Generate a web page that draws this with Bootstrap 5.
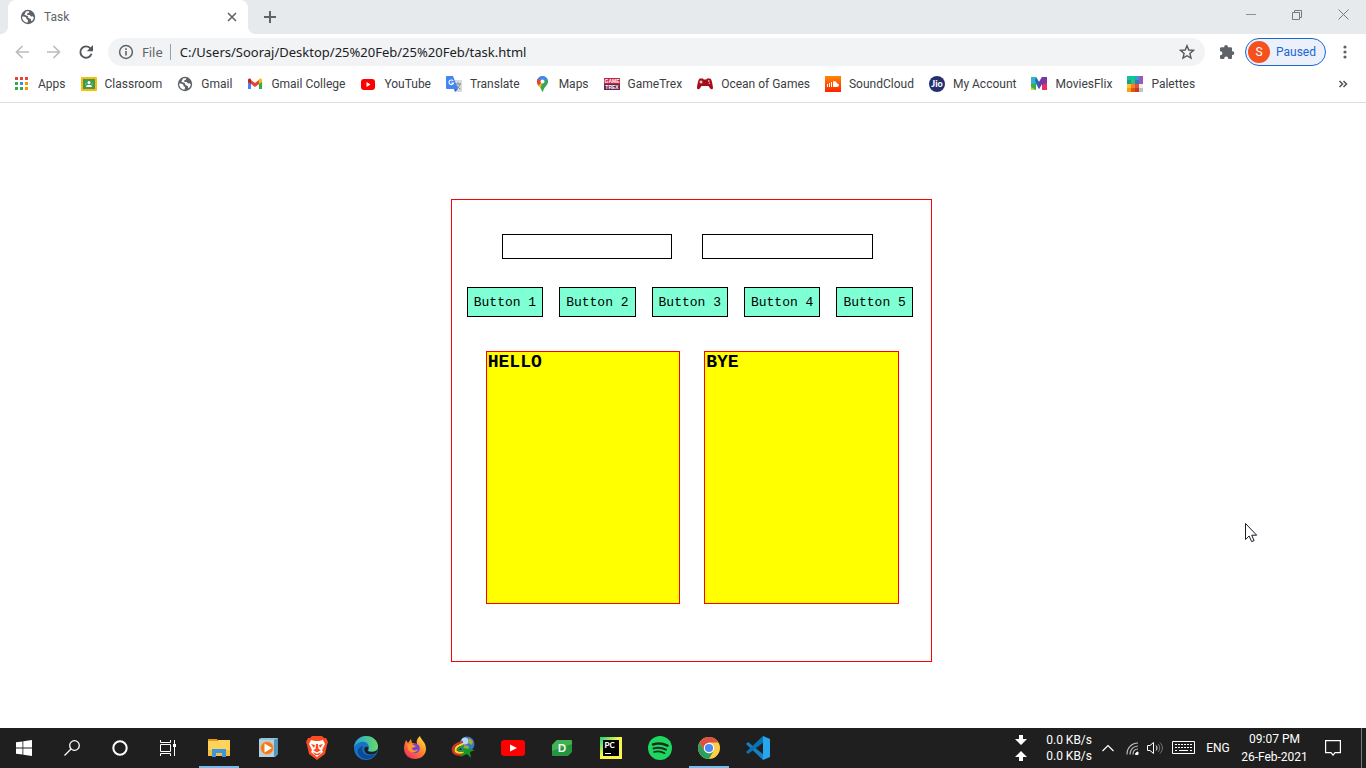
<!DOCTYPE html>
<html lang="en">
<head>
<meta charset="utf-8">
<meta name="viewport" content="width=device-width, initial-scale=1">
<title>Task</title>
<link href="https://cdn.jsdelivr.net/npm/bootstrap@5.3.0/dist/css/bootstrap.min.css" rel="stylesheet">
<style>
  body { font-family: Roboto, "Noto Sans", sans-serif; font-size: 12px; line-height: 16px; color: #3c4043; background: #fff; }
  svg { display: block; flex-shrink: 0; }
  .plain { border: 0; background: none; padding: 0; color: inherit; display: flex; align-items: center; justify-content: center; flex-shrink: 0; }

  /* tab strip */
  .tab-strip { background: #e7eaed; height: 34px; padding-left: 8px; }
  .active-tab { position: relative; width: 240px; background: #fff; border-radius: 8px 8px 0 0; padding: 0 10px 0 12px; color: #5f6368; }
  .active-tab::before, .active-tab::after { content: ""; position: absolute; bottom: 0; width: 8px; height: 8px; }
  .active-tab::before { left: -8px; background: radial-gradient(circle at 0 0, transparent 8px, #fff 8px); }
  .active-tab::after { right: -8px; background: radial-gradient(circle at 100% 0, transparent 8px, #fff 8px); }
  .new-tab { width: 44px; height: 34px; }
  .win-btn { width: 46px; height: 29px; }

  /* toolbar */
  .toolbar { height: 36px; padding: 0 10px 0 6px; }
  .nav-btn { width: 32px; height: 28px; }
  .address { height: 28px; border-radius: 14px; background: #f1f3f4; margin-left: 6px; padding: 0 10px; color: #5f6368; font-family: "Noto Sans", sans-serif; font-size: 13px; }
  .address-sep { width: 1px; height: 16px; background: #9aa0a6; margin: 0 9px 0 7px; }
  .address input { border: 0; background: none; outline: 0; padding: 0; color: #202124; min-width: 0; }
  .address label { margin-left: 8px; }
  .extensions { margin: 0 10px 0 14px; }
  .profile { height: 28px; width: 81px; border: 1px solid #1967d2; border-radius: 14px; background: #ebf0fa; color: #1967d2; padding: 0 9px 0 2px; justify-content: space-between; }
  .avatar { width: 22px; height: 22px; border-radius: 50%; background: #f4511e; color: #fff; line-height: 22px; text-align: center; }

  /* bookmarks */
  .bookmarks { height: 33px; border-bottom: 1px solid #dadce0; padding: 0 14px 4px; gap: 15px; }
  .bookmarks a { color: inherit; text-decoration: none; gap: 8px; white-space: nowrap; }

  /* page */
  .page-area { padding-top: 96px; font-family: "Liberation Mono", "Courier New", monospace; color: #000; }
  .frame { width: 481px; margin-left: 33%; border: 1px solid #f00; padding: 34px 18px 57px 15px; }
  .fields { gap: 30px; margin: 0 40px 0 35px; }
  .field { flex: 1 1 0; min-width: 0; height: 25px; border: 1px solid #000; background: #fff; padding: 0 4px; }
  .mint { height: 30px; border: 1px solid #000; border-radius: 0; background: #7fffd4; font-size: 13px; line-height: 16px; padding: 2px 0 0; color: #000; flex: 1 1 0; }
  .panels { margin: 34px 14px 0 19px; }
  .panel { flex: 1 1 0; height: 253px; border: 1px solid #f00; background: #ff0; padding: 0 1px; }
  .panel h2 { font-size: 18px; line-height: 21px; font-weight: 700; margin: 0; }
  .pointer { position: absolute; right: 108px; bottom: 224px; }

  /* taskbar */
  .taskbar { height: 40px; background: #1f1f1f; color: #fff; }
  .sys { width: 48px; height: 40px; }
  .apps { margin-left: 2px; }
  .app { width: 49px; height: 40px; border-bottom: 2px solid transparent; border-top: 2px solid transparent; }
  .app.running { background: linear-gradient(#76b9ed, #76b9ed) center bottom / 40px 2px no-repeat; border: 0; }
  .tray { padding-right: 4px; border-right: 1px solid #777; margin-right: 4px; }
  .speed { width: 65px; }
  .lang { width: 44px; }
  .clock { width: 69px; line-height: 18px; text-align: center; white-space: nowrap; }
</style>
</head>
<body class="d-flex flex-column min-vh-100 position-relative">
<svg width="0" height="0" class="position-absolute" aria-hidden="true">
  <symbol id="globe" viewBox="0 0 16 16"><circle cx="8" cy="8" r="7.2" fill="#5f6368"/><path d="M2.2 7.6c1.600.2 3 .1 3.900 1 .8.7-.2 1.600.900 1.900.9.2 1.300.6 1 1.600l-.6 1.600c-3.100-.100-5.500-2.800-5.200-6.100zM6 2.500c1-.3 2.200-.5 3.300-.2l-.4 1.400-1.800.8.300 1.500 2.300.1 1.300 1.300 1.900-.2.900 1.200c-.3 1.700-1.200 3-2.500 3.900l-.4-1.800c-.2-.8-.8-1-1.600-1.100L8 8.500l.1-1.300-1.700-.6-2.100-.900z" fill="#fff"/></symbol>
</svg>

<header>
  <div class="tab-strip d-flex align-items-start">
    <div class="active-tab d-flex align-items-center h-100">
      <svg width="16" height="16"><use href="#globe"/></svg>
      <span class="flex-fill ms-2">Task</span>
      <button class="plain" aria-label="Close tab"><svg width="12" height="12" viewBox="0 0 12 12" stroke="#5f6368" stroke-width="1.6"><path d="M2 2l8 8M10 2l-8 8"/></svg></button>
    </div>
    <button class="plain new-tab" aria-label="New tab"><svg width="12" height="12" viewBox="0 0 12 12" stroke="#5f6368" stroke-width="2"><path d="M6 0v12M0 6h12"/></svg></button>
    <div class="d-flex ms-auto">
      <button class="plain win-btn" aria-label="Minimize"><svg width="10" height="10" viewBox="0 0 10 10" stroke="#8c8e90"><path d="M0 4.500h10"/></svg></button>
      <button class="plain win-btn" aria-label="Restore"><svg width="10" height="10" viewBox="0 0 10 10" fill="none" stroke="#77797b"><path d="M.5 2.500h7v7h-7zM2.500 2.500v-2h7v7h-2"/></svg></button>
      <button class="plain win-btn" aria-label="Close"><svg width="11" height="11" viewBox="0 0 11 11" stroke="#77797b"><path d="M.5.5l10 10M10.500.5l-10 10"/></svg></button>
    </div>
  </div>

  <div class="toolbar d-flex align-items-center">
    <button class="plain nav-btn" aria-label="Back"><svg width="14" height="14" viewBox="0 0 14 14" fill="none" stroke="#babcbe" stroke-width="1.700"><path d="M14 7H1.500M7.500 1L1.500 7l6 6"/></svg></button>
    <button class="plain nav-btn" aria-label="Forward"><svg width="14" height="14" viewBox="0 0 14 14" fill="none" stroke="#babcbe" stroke-width="1.700"><path d="M0 7h12.500M6.500 1l6 6-6 6"/></svg></button>
    <button class="plain nav-btn" aria-label="Reload"><svg width="16" height="16" viewBox="0 0 16 16"><path d="M12.600 4.600A5.700 5.700 0 1 0 13.500 9.800" fill="none" stroke="#54585c" stroke-width="1.900"/><path d="M15 1v6.200H8.800z" fill="#54585c"/></svg></button>
    <div class="address d-flex align-items-center flex-fill">
      <svg width="16" height="16" viewBox="0 0 16 16"><circle cx="8" cy="8" r="6.400" fill="none" stroke="#5f6368" stroke-width="1.500"/><path d="M7.200 7h1.600v4.500H7.200zM7.200 4.300h1.600v1.600H7.200z" fill="#5f6368"/></svg>
      <label for="url">File</label>
      <span class="address-sep"></span>
      <input id="url" class="flex-fill" type="text" value="C:/Users/Sooraj/Desktop/25%20Feb/25%20Feb/task.html">
      <button class="plain" aria-label="Bookmark"><svg width="16" height="16" viewBox="0 0 16 16"><path d="M8 1.700l1.800 4.300 4.700.4-3.600 3.100 1.100 4.600L8 11.700l-4 2.400 1.100-4.600L1.500 6.400 6.200 6z" fill="none" stroke="#54585c" stroke-width="1.400"/></svg></button>
    </div>
    <button class="plain extensions" aria-label="Extensions"><svg width="16" height="16" viewBox="0 0 16 16"><path d="M1 4.500Q1 3.200 2.300 3.200H5.200V2.800a1.800 1.800 0 0 1 3.700 0v.4h2.800q1.300 0 1.300 1.300v2.700h.4a1.900 1.900 0 0 1 0 3.800H13v2.700q0 1.300-1.300 1.300H9.200v-.4a2 2 0 0 0-4 0v.4H2.300Q1 15 1 13.700v-2.500h.4a2 2 0 0 0 0-4H1z" fill="#5f6368"/></svg></button>
    <button class="plain profile"><span class="avatar">S</span><span>Paused</span></button>
    <button class="plain ms-2" aria-label="Menu"><svg width="22" height="16" viewBox="0 0 22 16" fill="#5f6368"><circle cx="11" cy="3" r="1.600"/><circle cx="11" cy="8" r="1.600"/><circle cx="11" cy="13" r="1.600"/></svg></button>
  </div>

  <nav class="bookmarks d-flex align-items-center" aria-label="Bookmarks">
    <a href="#" class="d-flex align-items-center"><svg width="16" height="16" viewBox="1 0 16 16"><g fill="#ea4335"><path d="M2 1h3v3H2zM7 1h3v3H7zM12 1h3v3h-3z"/></g><path d="M2 6h3v3H2zM2 11h3v3H2zM7 11h3v3H7z" fill="#34a853"/><path d="M7 6h3v3H7z" fill="#4285f4"/><path d="M12 6h3v3h-3zM12 11h3v3h-3z" fill="#f29900"/></svg>Apps</a>
    <a href="#" class="d-flex align-items-center"><svg width="16" height="16" viewBox="0 0 16 16"><rect y="1" width="16" height="14" rx="1" fill="#fbbc04"/><path d="M2 3h12v10H2z" fill="#3f9b54"/><g fill="#fff"><circle cx="8" cy="6.500" r="1.500"/><path d="M5 11c0-3 6-3 6 0z"/></g><g fill="#8cc79b"><circle cx="4.800" cy="8" r=".8"/><circle cx="11.200" cy="8" r=".8"/></g></svg>Classroom</a>
    <a href="#" class="d-flex align-items-center"><svg width="16" height="16"><use href="#globe"/></svg>Gmail</a>
    <a href="#" class="d-flex align-items-center"><svg width="16" height="16" viewBox="0 0 16 16"><path d="M1 5v8h3V7z" fill="#4285f4"/><path d="M15 5v8h-3V7z" fill="#34a853"/><path d="M4 4l4 3 4-3v4l-4 3-4-3z" fill="#ea4335"/><path d="M1 6V4c0-1.500 1.800-2 3-1v5z" fill="#c5221f"/><path d="M15 6V4c0-1.500-1.800-2-3-1v5z" fill="#fbbc04"/></svg>Gmail College</a>
    <a href="#" class="d-flex align-items-center"><svg width="16" height="16" viewBox="0 0 16 16"><rect x="1" y="3" width="14" height="11" rx="3" fill="#f00"/><path d="M6.500 6l4 2.500-4 2.500z" fill="#fff"/></svg>YouTube</a>
    <a href="#" class="d-flex align-items-center"><svg width="16" height="16" viewBox="0 0 16 16"><path d="M6 4h9q1 0 1 1v10q0 1-1 1H9z" fill="#d6dadd"/><path d="M9 8h6M12 6.500V8M14 8c-.5 2-2 3.500-3.500 4.500M10.500 9c1 2 2 3 4 4" stroke="#7c8490" fill="none"/><path d="M0 1q0-1 1-1h6l5 13H1q-1 0-1-1z" fill="#4285f4"/><path d="M8 13h4l-3 3z" fill="#3367d6"/><path d="M7.200 5A2.300 2.300 0 1 0 7.500 7H5.300" fill="none" stroke="#fff" stroke-width="1.100"/></svg>Translate</a>
    <a href="#" class="d-flex align-items-center"><svg width="16" height="16" viewBox="0 0 16 16"><clipPath id="pin"><path d="M7.500 0a5.600 5.600 0 0 1 5.600 5.600c0 4-4.200 5-5 10h-1.200c-.8-5-5-6-5-10A5.600 5.600 0 0 1 7.500 0z"/></clipPath><g clip-path="url(#pin)"><path d="M0 0h15v16H0z" fill="#34a853"/><path d="M7.500 5.600L5 14 0 10 2 7z" fill="#fbbc04"/><path d="M0 1l7.500 4.600L3 10H0z" fill="#ea4335"/><path d="M3 0h12v2L7.500 6 3 2z" fill="#4285f4"/></g><circle cx="7.500" cy="5.600" r="2" fill="#fff"/></svg>Maps</a>
    <a href="#" class="d-flex align-items-center"><svg width="16" height="16" viewBox="0 0 16 16"><path d="M0 2h16v6H0z" fill="#c52342"/><path d="M0 8h16v6H0z" fill="#69264e"/><g fill="#fff" font-family="Liberation Sans" font-weight="700" font-size="5" text-anchor="middle"><text x="8" y="7">GAME</text><text x="8" y="13">TREX</text></g></svg>GameTrex</a>
    <a href="#" class="d-flex align-items-center"><svg width="16" height="16" viewBox="0 0 16 16"><path d="M3 2.500h3l.7 1h2.600l.7-1h3c1.500 0 2.500 5 3 9 .1 2.300-2 2.300-3 .8L11.500 10h-7L3 12.300c-1 1.500-3.100 1.500-3-.8.5-4 1.500-9 3-9z" fill="#a60d18"/><path d="M2.500 6h3M4 4.500v3" stroke="#fff"/><circle cx="11.800" cy="5" r=".8" fill="#fff"/><circle cx="12.500" cy="7.200" r=".8" fill="#eaa"/></svg>Ocean of Games</a>
    <a href="#" class="d-flex align-items-center"><svg width="16" height="16" viewBox="0 0 16 16"><linearGradient id="sc" x2="0" y2="1"><stop stop-color="#f80"/><stop offset="1" stop-color="#f20"/></linearGradient><path d="M0 0h16v16H0z" fill="url(#sc)"/><path d="M2.500 8v3M4.500 7v4M6.500 6v5" stroke="#fff"/><path d="M8 5.500c2-1 4 .2 4 2 2.600-.3 2.600 3.500 0 3.500H8z" fill="#fff"/></svg>SoundCloud</a>
    <a href="#" class="d-flex align-items-center"><svg width="16" height="16" viewBox="0 0 16 16"><circle cx="8" cy="8" r="8" fill="#25306f"/><text x="8" y="11" text-anchor="middle" font-family="Lato" font-weight="900" font-size="9" fill="#fff">Jio</text></svg>My Account</a>
    <a href="#" class="d-flex align-items-center"><svg width="16" height="16" viewBox="0 0 16 16"><path d="M0 1h5l3 5 3-5h5v13h-5V8l-3 5-3-5v6H0z" fill="#31b6c8"/><path d="M0 8l5-1v7H0z" fill="#39ad55"/><path d="M0 11l5 3H0z" fill="#c9d42a"/><path d="M11 1h5v13h-5V8l-3 5V6z" fill="#7c38a0"/><path d="M16 7v7h-5V9z" fill="#e8325c"/><path d="M5 1l3 5v7L4 5z" fill="#2c65b5"/></svg>MoviesFlix</a>
    <a href="#" class="d-flex align-items-center"><svg width="16" height="16" viewBox="0 0 16 16" shape-rendering="crispEdges"><path d="M0 0h4v4H0z" fill="#1abc9c"/><path d="M4 0h4v4H4z" fill="#00d084"/><path d="M8 0h4v4H8z" fill="#3498db"/><path d="M12 0h4v8h-4z" fill="#9b59b6"/><path d="M0 4h4v4H0z" fill="#16a085"/><path d="M4 4h4v4H4z" fill="#40b883"/><path d="M8 4h4v4H8z" fill="#2980b9"/><path d="M0 8h4v4H0z" fill="#fbc531"/><path d="M4 8h4v4H4z" fill="#f58220"/><path d="M8 8h4v4H8z" fill="#f04a32"/><path d="M12 8h4v4h-4z" fill="#ecf0f1"/><path d="M0 12h4v4H0z" fill="#ff9f0a"/><path d="M4 12h4v4H4z" fill="#df5710"/><path d="M8 12h4v4H8z" fill="#c0392b"/><path d="M12 12h4v4h-4z" fill="#bdc3c7"/></svg>Palettes</a>
    <button class="plain ms-auto" aria-label="More bookmarks"><svg width="18" height="16" viewBox="0 0 18 16" fill="none" stroke="#54585c" stroke-width="1.600"><path d="M5.500 5l3 3-3 3M9.500 5l3 3-3 3"/></svg></button>
  </nav>
</header>

<main class="page-area flex-fill">
  <section class="frame">
    <div class="fields d-flex">
      <input class="field" type="text" aria-label="First value">
      <input class="field" type="text" aria-label="Second value">
    </div>
    <div class="d-flex gap-3 mt-4 pt-1">
      <button class="mint">Button 1</button>
      <button class="mint">Button 2</button>
      <button class="mint">Button 3</button>
      <button class="mint">Button 4</button>
      <button class="mint">Button 5</button>
    </div>
    <div class="panels d-flex gap-4">
      <div class="panel"><h2>HELLO</h2></div>
      <div class="panel"><h2>BYE</h2></div>
    </div>
  </section>
</main>
<svg class="pointer" width="13" height="21" viewBox="0 0 13 21"><path d="M.5.5v16l3.600-3.500 2.500 5.600 2.500-1-2.400-5.400h5z" fill="#fff" stroke="#1b1b26"/></svg>

<footer class="taskbar d-flex align-items-center">
  <button class="plain sys" aria-label="Start"><svg width="16" height="16" viewBox="0 0 16 16" fill="#fff"><path d="M0 2.300L6.500 1.400v6.200H0zM7.300 1.300L16 0v7.600H7.300zM0 8.400h6.500v6.200L0 13.700zM7.300 8.400H16V16l-8.700-1.300z"/></svg></button>
  <button class="plain sys" aria-label="Search"><svg width="16" height="16" viewBox="0 0 16 16" fill="none" stroke="#fff" stroke-width="1.300"><circle cx="10.500" cy="5.500" r="4.800"/><path d="M7 9L.5 15.500"/></svg></button>
  <button class="plain sys" aria-label="Cortana"><svg width="16" height="16" viewBox="0 0 16 16"><circle cx="8" cy="8" r="6.700" fill="none" stroke="#fff" stroke-width="2"/></svg></button>
  <button class="plain sys" aria-label="Task view"><svg width="17" height="16" viewBox="0 0 17 16" fill="none" stroke="#fff"><path d="M.5 0v2.500h10V0M.5 16v-2.500h10V16M.5 4.500h10v7H.5zM14.500 0v16"/><path d="M13 4h3v3h-3z" fill="#fff" stroke="none"/></svg></button>
  <div class="apps d-flex align-items-center">
    <button class="plain app running" aria-label="File Explorer"><svg width="22" height="20" viewBox="0 0 22 20"><path d="M0 1h9l2 3H0z" fill="#e79a0c"/><path d="M0 3h10V2h12v16H0z" fill="#ffd259"/><path d="M0 12h22v6H0z" fill="#f5bd42"/><path d="M4 19v-8h14v8h-4v-4H8v4z" fill="#3a96dd"/></svg></button>
    <button class="plain app" aria-label="Media Player"><svg width="20" height="20" viewBox="0 0 20 20"><path d="M3 0h17v16l-3 3H1V1z" fill="#8fc6df"/><path d="M1 2h15v17H1z" fill="#b1d3e4"/><path d="M16 2l4-2v16l-4 3z" fill="#5296ba"/><circle cx="9" cy="10" r="6.500" fill="#f17a1b" stroke="#f7b27c"/><path d="M6.500 5.500l7.500 4.500-7.500 4.500z" fill="#fff"/></svg></button>
    <button class="plain app" aria-label="Brave"><svg width="22" height="24" viewBox="0 0 22 24"><path d="M6 0h10l2 2h2l2 4-1 3-2 9-8 6-8-6-2-9-1-3 2-4h2z" fill="#fb4b20"/><path d="M5 4l4 1h4l4-1 2 4-3 6 1 2-6 5-6-5 1-2-3-6z" fill="#fff"/><path d="M5 8l4 1-1 3zm12 0l-4 1 1 3zM10 8h2l.5 5 2.500 1-4 2.500L7 14l2.500-1zM7 16l4 2 4-2-2 3h-4z" fill="#fb4b20"/></svg></button>
    <button class="plain app" aria-label="Edge"><svg width="24" height="24" viewBox="0 0 24 24"><linearGradient id="ed"><stop stop-color="#239fe0"/><stop offset="1" stop-color="#69dc63"/></linearGradient><circle cx="12" cy="12" r="12" fill="#1672c5"/><path d="M0 11C1 4 6 0 12 0c7 0 12 5 12 10.500 0 5-6 6.500-9.500 4.500-1-1 1-1 .5-4C14 4 5 4 0 11z" fill="url(#ed)"/><path d="M9 10c-3 7 4 12 13 8-5 7-14 6-17 1-3-4-1-8 4-9z" fill="#0d4995"/><path d="M10.500 12c-1 3 1.500 6.500 6 6.500 3 0 5-1 6-2l1-3c-2 2.500-7 3-9.500 1.500-1-1 .5-1.500.2-3.500-.8-1.300-3-1-3.700.5z" fill="#1f1f1f"/></svg></button>
    <button class="plain app" aria-label="Firefox"><svg width="24" height="24" viewBox="0 0 24 24"><linearGradient id="ff" x1="1" y1="0" x2=".2" y2="1"><stop stop-color="#fff14b"/><stop offset=".5" stop-color="#ff8926"/><stop offset="1" stop-color="#f42b63"/></linearGradient><path d="M3 4l2 3 3-4 1 4 5 1c-1-4 1-6 3-8 1 4 6 6 6 13 0 6-5 10-11 10S1 19 1 12c0-3 1-5 2-8z" fill="url(#ff)"/><circle cx="12" cy="12.500" r="4.800" fill="#7543d6"/><path d="M4 8l6 .5 3 2-4 1.500c0 3 4 3 6 1-1 4-8 5-10 0z" fill="#ff962b"/></svg></button>
    <button class="plain app" aria-label="Download Manager"><svg width="25" height="24" viewBox="0 0 25 24"><circle cx="16" cy="8" r="7.500" fill="#3976c4"/><circle cx="14" cy="5" r="3.500" fill="#b9d6ef"/><path d="M18 2l4 3-1 4-4-2zM12 9l6 1-1 4-4-1z" fill="#a5aa42"/><g fill="none" stroke-width="2.200"><path d="M12 6C5 7 1 11 2 15s7 4 11 3" stroke="#d8322c"/><path d="M12 8c-5 1-8 4-7.500 6.500S10 17 14 16" stroke="#ffd71f"/><path d="M13 10c-4 1-6 2-6 3.500s4 1.500 7 1" stroke="#279839"/></g><path d="M12 12l12 2-5 2 1 6-4-4-7 3 4-5z" fill="#139a22"/></svg></button>
    <button class="plain app" aria-label="YouTube"><svg width="24" height="24" viewBox="0 0 24 24"><rect y="4" width="24" height="16" rx="3" fill="#f00"/><path d="M9 8.500l7 3.500-7 3.500z" fill="#fff"/></svg></button>
    <button class="plain app" aria-label="D"><svg width="20" height="20" viewBox="0 0 20 20"><path d="M5 2h14q1 0 1 1v11l-4 4H1q-1 0-1-1V7z" fill="#249640"/><path d="M5 2h14l1 1v3L0 13V7z" fill="#43b052"/><text x="10" y="14" text-anchor="middle" font-family="Lato" font-weight="700" font-size="11" fill="#fff">D</text></svg></button>
    <button class="plain app" aria-label="PyCharm"><svg width="22" height="22" viewBox="0 0 22 22"><linearGradient id="py" y2="1"><stop stop-color="#16d181"/><stop offset=".45" stop-color="#f6f448"/><stop offset="1" stop-color="#fcf84a"/></linearGradient><path d="M0 0h22v22H0z" fill="url(#py)"/><path d="M3 3h16v16H3z"/><text x="4.500" y="11" font-family="Lato" font-weight="900" font-size="8" fill="#fff">PC</text><path d="M5 16h6v1H5z" fill="#fff"/></svg></button>
    <button class="plain app" aria-label="Spotify"><svg width="24" height="24" viewBox="0 0 24 24"><circle cx="12" cy="12" r="12" fill="#1ed760"/><g fill="none" stroke="#182f20" stroke-linecap="round"><path d="M5 8.500c5-1.500 10-1 14.500 1.200" stroke-width="2.500"/><path d="M5.500 12.500c4-1.300 8.500-.8 12.500 1.200" stroke-width="2"/><path d="M6 16c3.500-1 7.500-.6 10.500 1.200" stroke-width="1.700"/></g></svg></button>
    <button class="plain app running" aria-label="Chrome"><svg width="22" height="22" viewBox="0 0 22 22"><circle cx="11" cy="11" r="11" fill="#ffcd46"/><path d="M1.500 5.500A11 11 0 0 1 20.500 5.500H11L6.200 13.800z" fill="#dd5144"/><path d="M1.500 5.500l4.700 8.300 4.800 2.700 4.500-2.500L11 22A11 11 0 0 1 1.500 5.500z" fill="#2a9f5d"/><circle cx="11" cy="11" r="5.200" fill="#fff"/><circle cx="11" cy="11" r="4.100" fill="#4c8bf5"/></svg></button>
    <button class="plain app" aria-label="Visual Studio Code"><svg width="24" height="24" viewBox="0 0 24 24"><path d="M0 8l2-2 16 13-1 5z" fill="#1780c5"/><path d="M0 16l2 2L18 6l-1-6z" fill="#0873b8"/><path d="M17 0l7 3v18l-7 3z" fill="#27a5ed"/></svg></button>
  </div>

  <div class="tray d-flex align-items-center h-100 ms-auto">
    <svg width="12" height="28" viewBox="0 0 12 28" fill="#fff"><path d="M4 1h4v4h4l-6 6-6-6h4zM4 27h4v-4h4l-6-6-6 6h4z"/></svg>
    <div class="speed text-nowrap text-end">0.0 KB/s<br>0.0 KB/s</div>
    <button class="plain ms-2" aria-label="Hidden icons"><svg width="16" height="16" viewBox="0 0 16 16" fill="none" stroke="#fff" stroke-width="1.200"><path d="M2.500 11L8 5.500l5.500 5.500"/></svg></button>
    <svg class="ms-2" width="18" height="16" viewBox="0 0 18 16" fill="none" stroke="#bbb"><path d="M3 14.500C3 7.500 8 3 14 3M6 14.500C6 9.500 9.500 6 14 6M9 14.500C9 11 11 9 14 9" stroke-width="1.200"/><path d="M11.500 14.500c0-1.500 1-2.500 2.500-2.500v2.500z" fill="#fff" stroke="#fff"/></svg>
    <svg class="ms-1" width="18" height="16" viewBox="0 0 18 16" fill="none" stroke="#fff"><path d="M1.500 5.500H4l3.500-3v11l-3.500-3H1.500z"/><path d="M10 5.500c1.300 1.500 1.300 3.500 0 5"/><path d="M12 4c2.300 2.500 2.300 5.500 0 8M14 2.500c3.200 3.500 3.200 7.500 0 11" stroke="#777"/></svg>
    <svg class="ms-2" width="24" height="14" viewBox="0 0 24 14" fill="none" stroke="#fff"><path d="M.5.5h22v12H.5z"/><path d="M3 3.500h17M3 6.500h17" stroke-dasharray="2 1"/><path d="M3 9.500h2M7 9.500h9M18 9.500h2"/></svg>
    <button class="plain lang">ENG</button>
    <div class="clock">09:07 PM<br>26-Feb-2021</div>
    <button class="plain sys" aria-label="Notifications"><svg width="16" height="16" viewBox="0 0 16 16" fill="none" stroke="#fff" stroke-width="1.200"><path d="M.6.6h14.800v12H10l-2 2.500-2-2.500H.6z"/></svg></button>
  </div>
</footer>
<script src="https://cdn.jsdelivr.net/npm/bootstrap@5.3.0/dist/js/bootstrap.bundle.min.js"></script>
</body>
</html>
